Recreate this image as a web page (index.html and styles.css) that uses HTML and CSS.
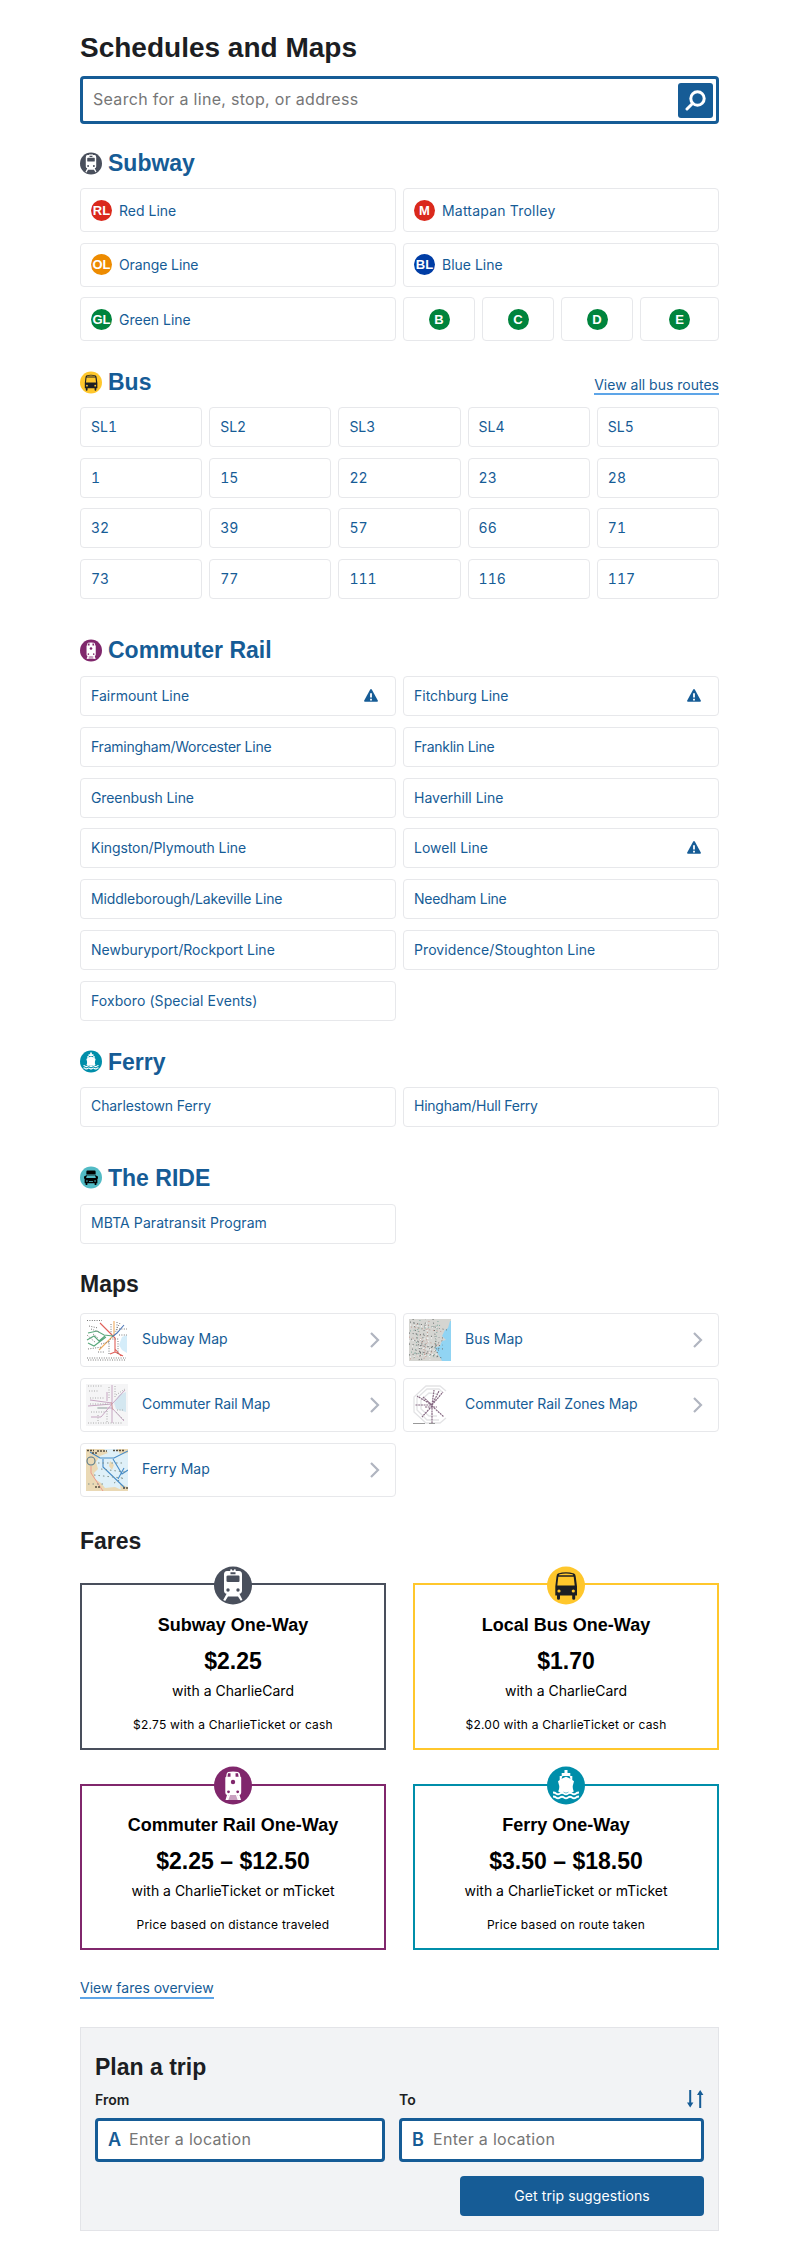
FILE: index.html
```html
<!DOCTYPE html>
<html lang="en">
<head>
<meta charset="utf-8">
<title>Schedules and Maps</title>
<link rel="stylesheet" href="styles.css">
</head>
<body>
<svg class="sprite" aria-hidden="true">
  <symbol id="subway" viewBox="0 0 38 38">
    <circle cx="19" cy="19" r="19" fill="#494f5c"/>
    <path fill="#fff" d="M13 4.500h3.200l.3-1.800h1.200l.5 1.200h1.600l.5-1.200h1.200l.3 1.800H25q3 .3 3 3.500V24q0 3-2.600 3.300l3 6-1.600 1L24 30H14l-2.800 4.500-2-.9 3.400-6.300Q10 27 10 24V8q0-3.200 3-3.500z"/>
    <path fill="#494f5c" d="M14 9h10.500q1 0 1 1v4.500q0 1-1 1H14q-1.500 0-1.500-1V10q0-1 1.500-1zM16.500 5.800h5v1.900h-5z"/>
    <circle cx="14" cy="23.500" r="1.700" fill="#494f5c"/><circle cx="24" cy="23.500" r="1.700" fill="#494f5c"/>
  </symbol>
  <symbol id="bus" viewBox="0 0 38 38">
    <circle cx="19" cy="19" r="19" fill="#ffc72c"/>
    <path fill="#1c1e23" d="M11 7q8-2.500 16 0 1.500.7 1.700 3L30 20v9h-1.800v3q0 1.200-1.500 1.200t-1.500-1.200v-3H13v3q0 1.200-1.500 1.200T10 32v-3H8.300v-9L9.500 10q.2-2.300 1.500-3z"/>
    <path fill="#ffc72c" d="M12.500 7.700q6.500-1.500 13 0l.7 1.100H11.800zM11.300 10.300h15.400l1 8.700H10.300z"/>
    <circle cx="12" cy="24.500" r="1.600" fill="#ffc72c"/><circle cx="26.300" cy="24.500" r="1.600" fill="#ffc72c"/>
  </symbol>
  <symbol id="rail" viewBox="0 0 38 38">
    <circle cx="19" cy="19" r="19" fill="#80276c"/>
    <path fill="#fff" d="M14 5.500q5-1 10 0 1.800.5 2 2.500l.3 2 .9 1v15q0 2-1.700 2.500l1.500 5H11.500l1.500-5q-1.700-.5-1.700-2.500V11l1-1 .2-2q.2-2 1.500-2.500z"/>
    <path fill="#80276c" d="M14 6.700h2.500v3.500h-3zM21.500 6.700H24l.6 3.500h-3zM14.600 28.500l-1.500 5h11.800l-1.500-5z"/>
    <path fill="#c9a1c0" d="M15.500 28.500h7l2 5h-11z"/><path d="M14.500 28.500l-2 5h1.800l1.800-5zM23.500 28.500l2 5h-1.800l-1.800-5z" fill="#fff"/>
    <circle cx="19" cy="15.500" r="2.200" fill="#80276c"/><circle cx="14.500" cy="25.300" r="1.400" fill="#80276c"/><circle cx="23.700" cy="25.300" r="1.400" fill="#80276c"/>
  </symbol>
  <symbol id="ferry" viewBox="0 0 38 38">
    <circle cx="19" cy="19" r="19" fill="#008eaa"/>
    <path fill="#fff" d="M17.500 3.500h3v3h2.800v3h2v4l1.700 1.300-1.200 4.500q-.4 3 1 5.700-3 2-5.300.3-2.500 2-5 0-2.300 1.700-5.300-.3 1.400-2.700 1-5.700L11 14.800l1.700-1.300v-4h2v-3h2.800z"/>
    <path fill="#008eaa" d="M15.500 9.500h7l1 2.800-4.500-2-4.500 2z"/>
    <path fill="none" stroke="#fff" stroke-width="1.900" d="M6 26q2 0 3 1 2 1.500 4 0t4 0 4 0 4 0 4 0q1-1 3-1M6 30q2 0 3 1 2 1.500 4 0t4 0 4 0 4 0 4 0q1-1 3-1"/>
  </symbol>
  <symbol id="ride" viewBox="0 0 38 38">
    <circle cx="19" cy="19" r="19" fill="#52bbc5"/>
    <path d="M12.500 7h13q1.500 0 1.500 2v5H11V9q0-2 1.500-2zM10.500 15h17l2 2h1.500v4h-1v8h-1.700v3h-3v-3H12.700v3h-3v-3H8v-8H7v-4h1.500z"/>
    <path fill="#52bbc5" d="M12 15.700h14l1.500 4.300h-17zM15.500 25.500h7v1.300h-7z"/><circle cx="12" cy="25" r="1.400" fill="#52bbc5"/><circle cx="26" cy="25" r="1.400" fill="#52bbc5"/>
  </symbol>
  <symbol id="alert" viewBox="0 0 14 13">
    <path fill="#165c96" d="M6.200.6q.8-1.200 1.600 0l6 10.800q.5 1.400-.8 1.400H1Q-.3 12.800.2 11.400z"/>
    <path fill="#fff" d="M6.100 4.200h1.800v4.300H6.100zM6.100 9.700h1.800v1.700H6.100z"/>
  </symbol>
  <symbol id="chevron" viewBox="0 0 10 16"><path fill="none" stroke="#b0b5c0" stroke-width="2.200" d="M1 1l7 7-7 7"/></symbol>
</svg>
<main class="page">
  <h1 class="title">Schedules and Maps</h1>
  <div class="search">
    <input class="search-input" placeholder="Search for a line, stop, or address" aria-label="Search">
    <button class="search-button" aria-label="Search"><svg width="21" height="21" viewBox="0 0 21 21"><g fill="none" stroke="#fff"><circle cx="12.500" cy="8.500" r="6.700" stroke-width="3"/><path d="M7.500 13.500L2 19" stroke-width="3" stroke-linecap="round"/></g></svg></button>
  </div>

  <section class="group subway">
    <h2 class="mode"><svg class="mode-icon"><use href="#subway"/></svg>Subway</h2>
    <div class="grid two">
      <a class="tile"><i class="pill red">RL</i>Red Line</a>
      <a class="tile wide"><i class="pill red">M</i>Mattapan Trolley</a>
      <a class="tile tight"><i class="pill orange">OL</i>Orange Line</a>
      <a class="tile"><i class="pill blue">BL</i>Blue Line</a>
      <a class="tile"><i class="pill green">GL</i>Green Line</a>
      <div class="branches">
        <a class="tile branch"><i class="pill green">B</i></a>
        <a class="tile branch"><i class="pill green">C</i></a>
        <a class="tile branch"><i class="pill green">D</i></a>
        <a class="tile branch"><i class="pill green">E</i></a>
      </div>
    </div>
  </section>

  <section class="group bus">
    <div class="heading-row">
      <h2 class="mode"><svg class="mode-icon"><use href="#bus"/></svg>Bus</h2>
      <a class="link">View all bus routes</a>
    </div>
    <div class="grid five">
      <a class="tile">SL1</a><a class="tile">SL2</a><a class="tile">SL3</a><a class="tile">SL4</a><a class="tile">SL5</a>
      <a class="tile">1</a><a class="tile">15</a><a class="tile">22</a><a class="tile">23</a><a class="tile">28</a>
      <a class="tile">32</a><a class="tile">39</a><a class="tile">57</a><a class="tile">66</a><a class="tile">71</a>
      <a class="tile">73</a><a class="tile">77</a><a class="tile">111</a><a class="tile">116</a><a class="tile">117</a>
    </div>
  </section>

  <section class="group rail">
    <h2 class="mode"><svg class="mode-icon"><use href="#rail"/></svg>Commuter Rail</h2>
    <div class="grid two">
      <a class="tile">Fairmount Line<svg class="alert"><use href="#alert"/></svg></a>
      <a class="tile">Fitchburg Line<svg class="alert"><use href="#alert"/></svg></a>
      <a class="tile tighter">Framingham/Worcester Line</a>
      <a class="tile tighter">Franklin Line</a>
      <a class="tile tight">Greenbush Line</a>
      <a class="tile">Haverhill Line</a>
      <a class="tile tight">Kingston/Plymouth Line</a>
      <a class="tile">Lowell Line<svg class="alert"><use href="#alert"/></svg></a>
      <a class="tile tight">Middleborough/Lakeville Line</a>
      <a class="tile tighter">Needham Line</a>
      <a class="tile">Newburyport/Rockport Line</a>
      <a class="tile slightly-wide">Providence/Stoughton Line</a>
      <a class="tile slightly-wide">Foxboro (Special Events)</a>
    </div>
  </section>

  <section class="group ferry">
    <h2 class="mode"><svg class="mode-icon"><use href="#ferry"/></svg>Ferry</h2>
    <div class="grid two">
      <a class="tile tight">Charlestown Ferry</a>
      <a class="tile tighter">Hingham/Hull Ferry</a>
    </div>
  </section>

  <section class="group ride">
    <h2 class="mode"><svg class="mode-icon"><use href="#ride"/></svg>The RIDE</h2>
    <div class="grid two"><a class="tile slightly-wide">MBTA Paratransit Program</a></div>
  </section>

  <section class="group maps">
    <h2 class="plain">Maps</h2>
    <div class="grid two">
      <a class="tile">
        <svg class="thumb" viewBox="0 0 42 42"><path fill="#fff" d="M0 0h42v42H0z"/><path fill="#d5edfa" d="M36 18l5-2v18l-5-3-3-5z"/><g fill="none" stroke-width="1.100"><path stroke="#e0605a" d="M14 4l8 8 7 7v14l8 4M29 30l6 7M29 33l-5 2"/><path stroke="#eeab5c" d="M28 2v14L13 31"/><path stroke="#4e78b8" d="M26 18l5-4 7-8"/><path stroke="#5aa87c" d="M27 17l-9-1-7-4-9 2M19 17l-6 5-5-5-7 4M20 18L8 27l-6-3"/></g><g fill="none" stroke="#777" stroke-dasharray="1 1.400"><path d="M1 1.500h15M3 7l9 2M5 10l8 3M25 5v10M31 3v10M23 22v13M32 22v14M2 30l14-2M1 39h39M2 41h38M33 10h8M33 16h8M15 25l8-2M12 33h7M7 15l5 4M24 20h9M1 16l9 8M34 4l-5 9"/></g></svg>
        <span>Subway Map</span><svg class="chevron"><use href="#chevron"/></svg></a>
      <a class="tile">
        <svg class="thumb" viewBox="0 0 42 42"><path fill="#d5d5d1" d="M0 0h42v42H0z"/><path fill="#91d4f3" d="M42 2v40H33l-4-7-3-6 5-2 2-5 4-1-4-4 3-6 3-2 2-7z"/><g fill="none" stroke-dasharray="1 2.700"><path stroke="#666b6b" d="M1 3l37 8M0 14l34 5M0 25l34 5M0 36l30-5M4 0l9 42M17 0l-7 42M24 0l5 40M2 20l20 8 12-2M3 30l30 9M20 30l14-9"/><path stroke="#c59a91" d="M2 8l33 5M0 18l30 8M8 5l9 33M20 2l-5 38M1 40l28-9"/><path stroke="#80aaa0" d="M1 12l32-6M2 33l26 5M11 1l-6 40M29 2l-4 37"/><path stroke="#fff" d="M1 6l30 3M0 22l30-4M3 27l25 5M17 0l4 41M1 38l28-3"/></g></svg>
        <span>Bus Map</span><svg class="chevron"><use href="#chevron"/></svg></a>
      <a class="tile tight">
        <svg class="thumb" viewBox="0 0 42 42"><path fill="#f5f5f6" d="M0 0h42v42H0z"/><path fill="#d4e7f0" d="M40 8v20l-10-3-2-6 5-8z"/><g fill="none" stroke="#bb93b6" stroke-width=".8"><path d="M26 1v19l13-14M26 19L4 16M26 20L2 22M26 20L15 33H5M26 20v19M26 24l12 13M21 8v9M12 24h14"/><path stroke="#d8a19c" d="M25 18l2 8"/><path stroke="#94bea7" d="M11 24h10"/></g><g fill="none" stroke="#aaa" stroke-dasharray="1 1.500"><path d="M2 2h14M3 7h10M4 14h15M4 20h18M5 28h14M23 3v12M29 2v12M30 11l9-6M30 28l8 8M21 27v12M2 39h35M12 31v6M31 26h6"/></g></svg>
        <span>Commuter Rail Map</span><svg class="chevron"><use href="#chevron"/></svg></a>
      <a class="tile tight">
        <svg class="thumb" viewBox="0 0 42 42"><path fill="#fff" d="M0 0h42v42H0z"/><g fill="none" stroke="#e3e3e5" stroke-width="1.300"><path d="M37 7l-6-5H17L5 13v15l12 11h14l6-5M33 8l-3-3H18L8 14v12l10 10h12M29 10l-9-1-8 7v9l8 7h8"/></g><g fill="none" stroke="#866982" stroke-width="1.200" stroke-dasharray="2 .7"><path d="M23 21L8 12M22 21H6M23 21v18M23 21L34 8M23 21l2-15M23 22l12 11M23 22L13 33M14 13l9 8M23 21l7-14M16 23h12"/></g><path d="M4 39.500h12M20 39.500h6" stroke="#999"/></svg>
        <span>Commuter Rail Zones Map</span><svg class="chevron"><use href="#chevron"/></svg></a>
      <a class="tile">
        <svg class="thumb" viewBox="0 0 42 42"><path fill="#dff0f8" d="M0 0h42v42H0z"/><path fill="#ead9b5" d="M0 0h18l4 4-8 3-4 6 2 7-4 4 1 6 6 4 4 5 10-1 9 4H0zM31 0h11v4l-8 1zM24 12l4 4-2 5-3-4zM34 35l8 3v4h-7z"/><g fill="none" stroke="#458bc7" stroke-width="1.100"><path d="M4 3l10 6h14l14-7M17 10v8l22 21M27 10l9 15 6-4M32 30l6-11"/><circle cx="5" cy="12" r="4" stroke="#56798c"/></g><path fill="none" stroke="#eb998d" d="M5 17v7l6 9 6 9"/><path fill="none" stroke="#554e40" stroke-width="1.500" stroke-dasharray="2 1" d="M1 1.500h7M11 2h10M6 4h6M27 1.500h11M9 38h6M37 39h5"/><path fill="none" stroke="#81938d" stroke-dasharray="1.500 3" d="M12 14h25M15 20l24 3M8 26l28 3M2 35h17M28 34l9-5"/></svg>
        <span>Ferry Map</span><svg class="chevron"><use href="#chevron"/></svg></a>
    </div>
  </section>

  <section class="group fares">
    <h2 class="plain">Fares</h2>
    <div class="cards">
      <article class="card subway-fare"><svg class="badge"><use href="#subway"/></svg><h3>Subway One-Way</h3><strong>$2.25</strong><p>with a CharlieCard</p><small>$2.75 with a CharlieTicket or cash</small></article>
      <article class="card bus-fare"><svg class="badge"><use href="#bus"/></svg><h3>Local Bus One-Way</h3><strong>$1.70</strong><p>with a CharlieCard</p><small>$2.00 with a CharlieTicket or cash</small></article>
      <article class="card rail-fare"><svg class="badge"><use href="#rail"/></svg><h3>Commuter Rail One-Way</h3><strong>$2.25 – $12.50</strong><p>with a CharlieTicket or mTicket</p><small>Price based on distance traveled</small></article>
      <article class="card ferry-fare"><svg class="badge"><use href="#ferry"/></svg><h3>Ferry One-Way</h3><strong>$3.50 – $18.50</strong><p>with a CharlieTicket or mTicket</p><small>Price based on route taken</small></article>
    </div>
    <a class="link">View fares overview</a>
  </section>

  <section class="planner">
    <h2 class="plain">Plan a trip</h2>
    <div class="fields">
      <div>
        <div class="label">From</div>
        <div class="field"><b>A</b><input placeholder="Enter a location" aria-label="From"></div>
      </div>
      <div>
        <div class="label">To<svg width="17" height="18" viewBox="0 0 17 18"><path d="M2.200 0h2v12.500h2.200L3.200 17.500 0 12.500h2.200zM12.200 18h2V5h2.200L13.200 0 10 5h2.200z" fill="#165c96"/></svg></div>
        <div class="field"><b>B</b><input placeholder="Enter a location" aria-label="To"></div>
      </div>
    </div>
    <button class="submit">Get trip suggestions</button>
  </section>
</main>
</body>
</html>
```
FILE: styles.css
```css
* { box-sizing: border-box; }
body { margin: 0; background: #fff; color: #1c1e23; font: 14px/21px Inter, sans-serif; }
h1, h2, h3, p { margin: 0; }
.sprite { display: none; }
.page { width: 639px; margin-left: 80px; padding-top: 31px; }
.title { font: bold 28px/34px "Liberation Sans", Arial, sans-serif; }
.search { display: flex; align-items: center; height: 48px; margin-top: 11px; padding: 0 3px 0 10px; border: 3px solid #165c96; border-radius: 4px; }
input { flex: 1; min-width: 0; padding: 0 0 2px; border: 0; outline: 0; background: none; font: 16px/24px Inter, sans-serif; letter-spacing: 0.3px; }
input::placeholder { color: #767676; opacity: 1; }
button { padding: 0; border: 0; background: #165c96; color: #fff; font: inherit; }
.search-button { display: flex; align-items: center; justify-content: center; width: 35px; height: 35px; border-radius: 3px; }

.mode, .plain { display: flex; align-items: center; height: 28px; font: bold 23px/28px "Liberation Sans", Arial, sans-serif; color: #165c96; }
.plain { color: #1c1e23; }
.mode-icon { width: 22px; height: 23px; margin-right: 6px; }
.grid { display: grid; column-gap: 7px; row-gap: 10.700px; }
.two { grid-template-columns: 1fr 1fr; }
.five { grid-template-columns: repeat(5, 1fr); font-variant-numeric: tabular-nums; }
.tile { display: flex; align-items: center; height: 40px; padding: 0 10px 1px; border: 1px solid #e7e8eb; border-radius: 4px; color: #165c96; }
.tight { letter-spacing: -0.1px; }
.tighter { letter-spacing: -0.250px; }
.wide { letter-spacing: 0.2px; }
.slightly-wide { letter-spacing: 0.080px; }
.alert { width: 14px; height: 13px; margin-left: auto; margin-right: 7px; }

.subway { padding-top: 25px; }
.subway .grid { margin-top: 11px; row-gap: 10.500px; }
.subway .tile { height: 44px; padding-bottom: 0; }
.pill { display: flex; align-items: center; justify-content: center; width: 21px; height: 21px; margin-right: 7px; border-radius: 50%; color: #fff; font: bold 13px/21px "Liberation Sans", Arial, sans-serif; }
.red { background: #da291c; }
.orange { background: #ed8b00; }
.blue { background: #003da5; }
.green { background: #00843d; }
.branches { display: grid; grid-template-columns: 72px 72px 72px 79px; gap: 7px; }
.subway .branch { justify-content: center; padding: 0; }
.branch .pill { margin: 0; }

.bus { padding-top: 27px; }
.heading-row { display: flex; justify-content: space-between; align-items: flex-start; }
.link { color: #165c96; border-bottom: 2px solid #5da5e8; line-height: 18px; }
.heading-row .link { margin-top: 8px; line-height: 17px; }
.bus .grid { margin-top: 11px; }
.rail { padding-top: 37px; }
.rail .grid { margin-top: 12px; row-gap: 10.800px; }
.ferry { padding-top: 27px; }
.ferry .grid { margin-top: 11px; }
.ride .grid { margin-top: 12px; }
.ride { padding-top: 37px; }
.ferry .tile, .ride .tile { padding-bottom: 2px; }

.maps { padding-top: 26px; }
.maps .grid { margin-top: 15px; row-gap: 11px; }
.maps .tile { height: 54px; padding: 0 15px 0 5px; }
.maps .tile span { padding-bottom: 2px; }
.thumb { width: 42px; height: 42px; margin-right: 14px; }
.chevron { width: 10px; height: 16px; margin-left: auto; }

.fares { padding-top: 30px; }
.cards { display: grid; grid-template-columns: 306px 306px; justify-content: space-between; row-gap: 34px; margin-top: 28px; }
.card { position: relative; display: flex; flex-direction: column; align-items: center; height: 167px; padding-top: 29px; border: 2px solid; color: #000; }
.subway-fare { border-color: #494f5c; }
.bus-fare { border-color: #ffc72c; }
.rail-fare { border-color: #80276c; }
.ferry-fare { border-color: #008eaa; }
.rail-fare, .ferry-fare { height: 166px; padding-top: 28px; }
.badge { position: absolute; top: -19px; left: 132px; width: 38px; height: 39px; }
.rail-fare .badge, .ferry-fare .badge { top: -20px; }
.card h3 { font: bold 18px/22px "Liberation Sans", Arial, sans-serif; }
.card strong { margin-top: 11px; font: bold 23px/28px "Liberation Sans", Arial, sans-serif; }
.card p { margin-top: 5px; }
.card small { margin-top: 15px; font-size: 12px; line-height: 18px; letter-spacing: 0.220px; }
.fares > .link { display: inline-block; margin-top: 29px; }

.planner { height: 204px; margin-top: 28px; padding: 25px 14px 0; border: 1px solid #e3e4e8; background: #f2f3f5; }
.fields { display: grid; grid-template-columns: 290px 305px; justify-content: space-between; margin-top: 8px; }
.label { display: flex; align-items: center; justify-content: space-between; height: 21px; font-weight: 600; }
.field { display: flex; align-items: center; height: 44px; margin-top: 8px; padding: 0 10px; border: 3px solid #165c96; border-radius: 4px; background: #fff; }
.field b { width: 21px; color: #165c96; font-size: 18px; font-weight: 600; }
.submit { display: block; width: 244px; height: 40px; margin: 14px 0 0 auto; border-radius: 4px; letter-spacing: 0.1px; }
```
